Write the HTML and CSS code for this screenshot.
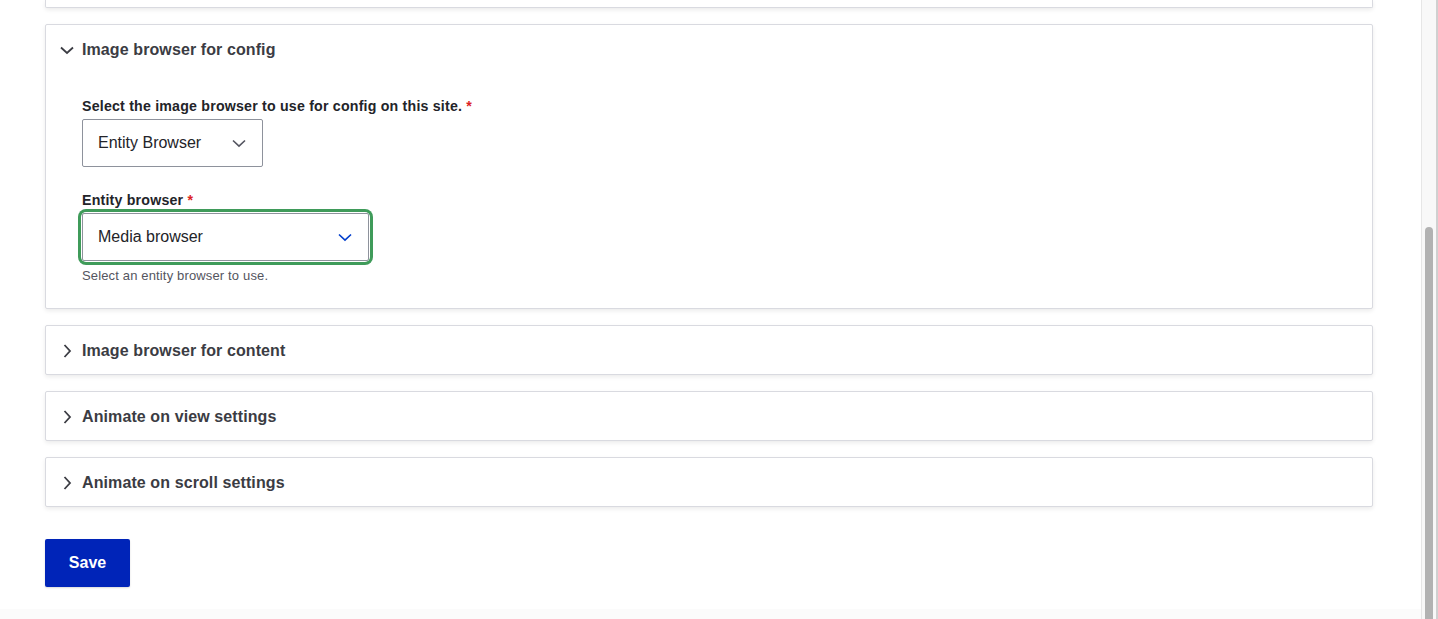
FILE: index.html
```html
<!DOCTYPE html>
<html lang="en">
<head>
<meta charset="utf-8">
<title>Image browser settings</title>
<link rel="stylesheet" href="styles.css">
</head>
<body>
<div class="viewport">
  <main class="page">
    <div class="card card--clipped"></div>

    <section class="card">
      <div class="summary">
        <svg class="chev" width="14" height="14" viewBox="0 0 14 14"><path d="M1 4.5 L7 10 L13 4.5" fill="none" stroke="#3b3c43" stroke-width="1.8"/></svg>
        <span class="summary__title">Image browser for config</span>
      </div>
      <div class="card__body">
        <div class="form-item">
          <label class="label">Select the image browser to use for config on this site. <span class="req">*</span></label>
          <div class="select select--small">
            <span>Entity Browser</span>
            <svg width="14" height="9" viewBox="0 0 14 9"><path d="M1 1.5 L7 7.2 L13 1.5" fill="none" stroke="#545560" stroke-width="1.6"/></svg>
          </div>
        </div>
        <div class="form-item form-item--second">
          <label class="label">Entity browser <span class="req">*</span></label>
          <div class="focus-ring">
            <div class="select select--wide">
              <span>Media browser</span>
              <svg width="14" height="9" viewBox="0 0 14 9"><path d="M1 1.5 L7 7.2 L13 1.5" fill="none" stroke="#003ecc" stroke-width="1.6"/></svg>
            </div>
          </div>
          <div class="desc">Select an entity browser to use.</div>
        </div>
      </div>
    </section>

    <section class="card">
      <div class="summary">
        <svg class="chev" width="14" height="14" viewBox="0 0 14 14"><path d="M4.5 1 L10 7 L4.5 13" fill="none" stroke="#3b3c43" stroke-width="1.8"/></svg>
        <span class="summary__title">Image browser for content</span>
      </div>
    </section>

    <section class="card">
      <div class="summary">
        <svg class="chev" width="14" height="14" viewBox="0 0 14 14"><path d="M4.5 1 L10 7 L4.5 13" fill="none" stroke="#3b3c43" stroke-width="1.8"/></svg>
        <span class="summary__title">Animate on view settings</span>
      </div>
    </section>

    <section class="card">
      <div class="summary">
        <svg class="chev" width="14" height="14" viewBox="0 0 14 14"><path d="M4.5 1 L10 7 L4.5 13" fill="none" stroke="#3b3c43" stroke-width="1.8"/></svg>
        <span class="summary__title">Animate on scroll settings</span>
      </div>
    </section>

    <div class="actions">
      <button class="btn-primary" type="button">Save</button>
    </div>
    <div class="footer-band"></div>
  </main>
  <div class="scrollbar"><div class="scrollbar__thumb"></div></div>
</div>
</body>
</html>
```

FILE: styles.css
```css
* { box-sizing: border-box; }
html, body { margin: 0; padding: 0; }
body {
  background: #ffffff;
  font-family: "Liberation Sans", Arial, sans-serif;
  color: #232429;
  height: 619px;
  overflow: hidden;
}
.viewport {
  display: flex;
  height: 619px;
}
.page {
  flex: 1;
  display: flex;
  flex-direction: column;
  padding: 0 48px 0 45px;
  min-width: 0;
}
.card {
  background: #fff;
  border: 1px solid #d9dae0;
  border-radius: 2px;
  box-shadow: 0 2px 4px rgba(0, 0, 0, 0.08);
  margin-bottom: 16px;
}
.card--clipped {
  height: 8px;
  border-top: 0;
  border-radius: 0 0 2px 2px;
}
.summary {
  display: flex;
  align-items: center;
  height: 48px;
  padding: 2px 0 0 14px;
}
.chev { display: block; margin-right: 8px; }
.summary__title {
  font-weight: bold;
  font-size: 16px;
  color: #3b3c43;
  letter-spacing: 0.1px;
}
.card__body {
  padding: 24px 36px 24px 36px;
}
.form-item { display: flex; flex-direction: column; align-items: flex-start; }
.form-item--second { margin-top: 24px; }
.label {
  font-weight: bold;
  font-size: 14.2px;
  line-height: 18px;
  margin-bottom: 4px;
  color: #232429;
  letter-spacing: 0.2px;
}
.req { color: #dc2323; }
.select {
  display: flex;
  align-items: center;
  justify-content: space-between;
  height: 48px;
  padding: 0 16px 0 15px;
  border: 1px solid #8e929c;
  border-radius: 2px;
  font-size: 16px;
  color: #232429;
  background: #fff;
}
.select--small { width: 181px; }
.select--wide { width: 287px; }
.focus-ring {
  border-radius: 4px;
  box-shadow: 0 0 0 1px #fff, 0 0 0 4px #3f9b5a;
}
.desc {
  margin-top: 7px;
  font-size: 13px;
  line-height: 16px;
  color: #545560;
  letter-spacing: 0.15px;
}
.actions { padding-top: 16px; }
.btn-primary {
  display: block;
  width: 85px;
  height: 48px;
  border: 0;
  border-radius: 2px;
  background: #0024b8;
  color: #fff;
  font-family: "Liberation Sans", Arial, sans-serif;
  font-weight: bold;
  font-size: 16px;
  box-shadow: 0 1px 2px rgba(0, 0, 0, 0.15);
}
.footer-band {
  margin: 22px -48px 0 -45px;
  flex: 1;
  background: #fbfbfb;
}
.scrollbar {
  width: 17px;
  flex: none;
  background: #f8f8f8;
  border-left: 1px solid #e6e6e6;
  border-right: 2px solid #d0d0d0;
  padding: 227px 3px 0 3px;
}
.scrollbar__thumb {
  height: 100%;
  background: #b2b2b2;
  border-radius: 4px 4px 0 0;
}
```
